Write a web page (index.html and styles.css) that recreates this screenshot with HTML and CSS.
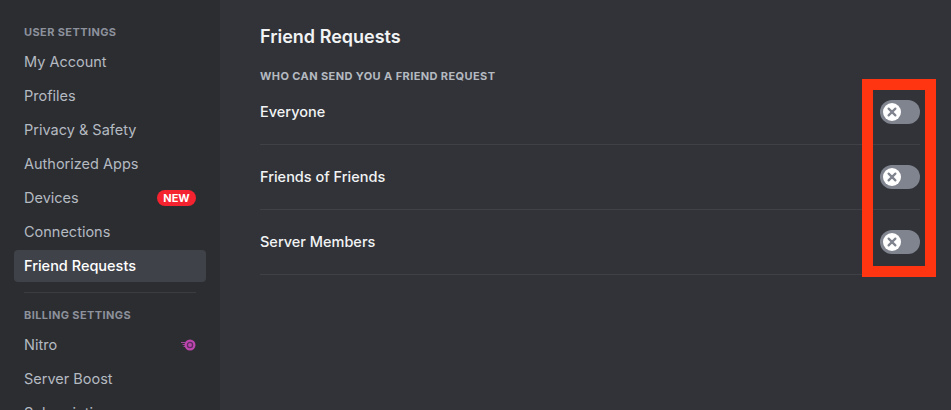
FILE: index.html
```html
<!DOCTYPE html>
<html lang="en">

<head>
    <meta charset="UTF-8">
    <meta name="viewport" content="width=device-width, initial-scale=1.0">
    <title>Friend Requests</title>
    <link rel="stylesheet" href="styles.css">
</head>

<body>
    <div class="app">
        <nav class="sidebar">
            <h2 class="side-head">User Settings</h2>
            <div class="side-item"><span>My Account</span></div>
            <div class="side-item"><span>Profiles</span></div>
            <div class="side-item"><span>Privacy &amp; Safety</span></div>
            <div class="side-item"><span>Authorized Apps</span></div>
            <div class="side-item"><span>Devices</span> <div class="badge">NEW</div></div>
            <div class="side-item"><span>Connections</span></div>
            <div class="side-item selected"><span>Friend Requests</span></div>
            <div class="side-sep"></div>
            <h2 class="side-head">Billing Settings</h2>
            <div class="side-item"><span>Nitro</span>
                <svg class="nitro" width="16" height="12" viewBox="0 0 16 12">
                    <path d="M1 3.5h4M2.5 5.5h3M3.5 7.5h2" stroke="#9c4a98" stroke-width="1" fill="none" />
                    <circle cx="10" cy="6" r="5.5" fill="#bd45ad" />
                    <circle cx="10" cy="6" r="2.6" fill="none" stroke="#5d2c60" stroke-width="1.3" />
                </svg>
            </div>
            <div class="side-item"><span>Server Boost</span></div>
            <div class="side-item"><span>Subscriptions</span></div>
        </nav>
        <main class="content">
            <h1>Friend Requests</h1>
            <h3 class="label">Who can send you a friend request</h3>
            <div class="row first">
                <span>Everyone</span>
                <div class="toggle"><div class="knob"><svg width="12" height="12" viewBox="0 0 12 12"><path d="M2.6 2.6l6.8 6.8M9.4 2.6l-6.8 6.8" stroke="#80848e" stroke-width="2.2" stroke-linecap="round" /></svg></div></div>
            </div>
            <div class="row">
                <span>Friends of Friends</span>
                <div class="toggle"><div class="knob"><svg width="12" height="12" viewBox="0 0 12 12"><path d="M2.6 2.6l6.8 6.8M9.4 2.6l-6.8 6.8" stroke="#80848e" stroke-width="2.2" stroke-linecap="round" /></svg></div></div>
            </div>
            <div class="row">
                <span>Server Members</span>
                <div class="toggle"><div class="knob"><svg width="12" height="12" viewBox="0 0 12 12"><path d="M2.6 2.6l6.8 6.8M9.4 2.6l-6.8 6.8" stroke="#80848e" stroke-width="2.2" stroke-linecap="round" /></svg></div></div>
            </div>
        </main>
    </div>
    <div class="highlight"></div>
</body>

</html>
```

FILE: styles.css
```css
* {
    margin: 0;
    padding: 0;
    box-sizing: border-box;
}

html,
body {
    height: 100%;
    overflow: hidden;
}

body {
    font-family: Inter, "Noto Sans", sans-serif;
    background-color: #313338;
}

.app {
    display: flex;
    height: 410px;
    overflow: hidden;
}

.sidebar {
    width: 220px;
    flex-shrink: 0;
    height: 410px;
    overflow: hidden;
    background-color: #2b2d31;
    padding: 24px 14px 0;
}

.side-head {
    height: 16px;
    padding-left: 10px;
    margin-bottom: 6px;
    font-size: 11px;
    line-height: 16px;
    font-weight: 700;
    letter-spacing: 0.4px;
    text-transform: uppercase;
    color: #8d919c;
}

.side-item {
    display: flex;
    justify-content: space-between;
    align-items: center;
    width: 192px;
    height: 32px;
    margin-bottom: 2px;
    padding: 0 10px;
    border-radius: 4px;
    font-size: 14.5px;
    color: #b5bac1;
}

.side-item span,
.row span {
    margin-bottom: 2px;
}

.side-item.selected {
    background-color: #404249;
    color: #fff;
    font-weight: 500;
}

.badge {
    width: 39px;
    height: 16px;
    border-radius: 8px;
    background-color: #f5222f;
    color: #fff;
    font-size: 11px;
    font-weight: 700;
    line-height: 16px;
    text-align: center;
}

.side-sep {
    width: 172px;
    height: 1px;
    margin: 10px 10px 14px;
    background-color: #3a3c42;
}

.content {
    flex: 1;
    padding: 25px 31px 0 40px;
}

h1 {
    font-size: 18px;
    line-height: 24px;
    font-weight: 600;
    color: #f2f3f5;
    margin-bottom: 19px;
}

.label {
    font-size: 11px;
    line-height: 16px;
    font-weight: 700;
    letter-spacing: 0.4px;
    text-transform: uppercase;
    color: #b5bac1;
}

.row {
    display: flex;
    justify-content: space-between;
    align-items: center;
    height: 65px;
    border-bottom: 1px solid #3f4147;
    font-size: 14.5px;
    font-weight: 500;
    color: #f2f3f5;
}

.row.first {
    height: 61px;
    padding-bottom: 4px;
}

.toggle {
    display: flex;
    align-items: center;
    width: 40px;
    height: 24px;
    padding-left: 3px;
    border-radius: 12px;
    background-color: #80848e;
}

.knob {
    display: flex;
    justify-content: center;
    align-items: center;
    width: 18px;
    height: 18px;
    border-radius: 50%;
    background-color: #fff;
}

.highlight {
    position: absolute;
    left: 862px;
    top: 79px;
    width: 74px;
    height: 198px;
    border: 11px solid #ff3410;
}
```
